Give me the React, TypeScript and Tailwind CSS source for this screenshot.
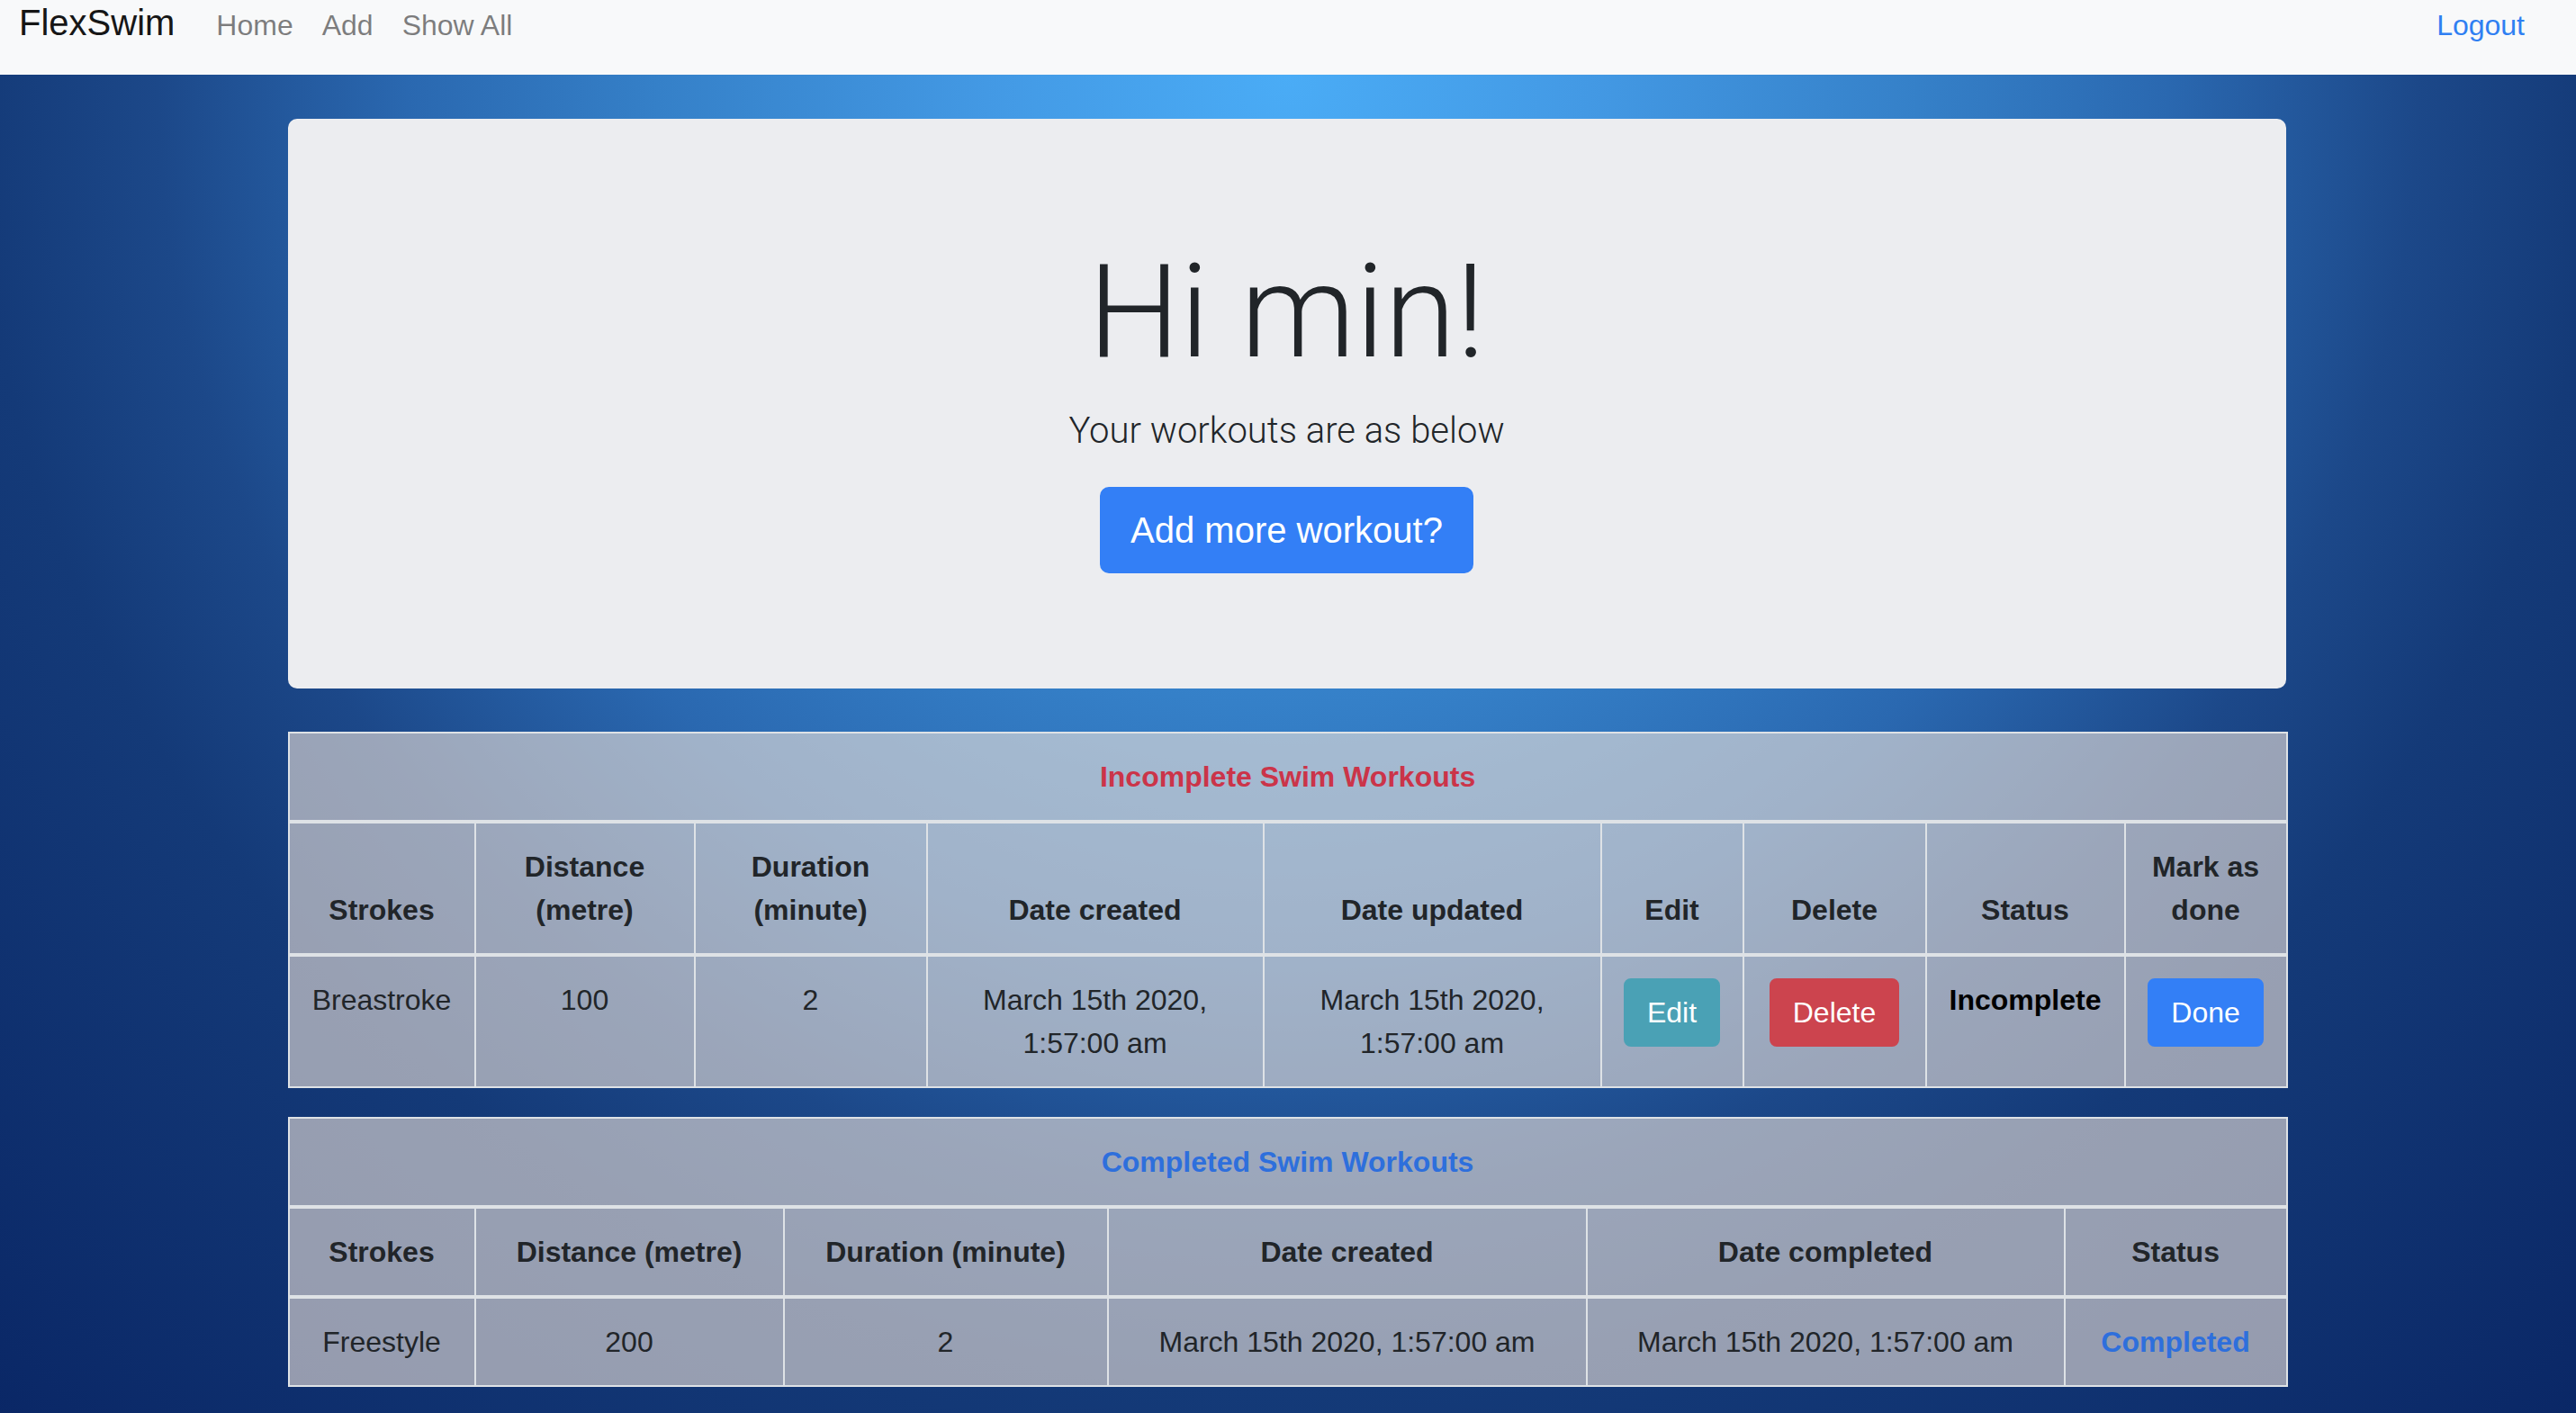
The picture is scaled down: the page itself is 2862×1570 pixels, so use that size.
import React from "react";

const th = "border-2 border-b-4 border-[#dee2e6] p-[24px] align-bottom font-bold";
const td = "border-2 border-[#dee2e6] p-[24px] align-top";
const btn = "inline-block align-top rounded-[8px] border-2 px-[24px] py-[12px] text-[32px] leading-[48px] text-white";

export default function App() {
  return (
    <div className="flex min-h-screen flex-col font-['Liberation_Sans',Arial,Helvetica,sans-serif] text-[#212529]">
      <nav className="flex h-[83px] shrink-0 items-baseline bg-[#f8f9fa] pl-[21px] pr-[41px] pt-[5px]">
        <span className="mr-[30px] text-[40px] leading-[40px] text-[#161616]">FlexSwim</span>
        <a className="px-[16px] text-[32px] leading-[32px] text-[rgba(0,0,0,0.5)]">Home</a>
        <a className="px-[16px] text-[32px] leading-[32px] text-[rgba(0,0,0,0.5)]">Add</a>
        <a className="px-[16px] text-[32px] leading-[32px] text-[rgba(0,0,0,0.5)]">Show All</a>
        <a className="ml-auto px-[16px] text-[32px] leading-[32px] text-[#2f7ff2]">Logout</a>
      </nav>
      <main className="flex-1 bg-[radial-gradient(circle_1460px_at_50%_0%,#4aacf6_0%,#4399e4_23%,#3580c8_48%,#2a68b0_67%,#1c4889_86%,#143a78_100%,#0a2766_142%)] pb-[28px] pr-[3px]">
        <div className="mx-auto w-[2220px] pt-[49px]">
          <section className="rounded-[10px] bg-[#ecedf0] px-[64px] py-[128px] text-center">
            <h1 className="mb-[16px] font-['Roboto',Arial,sans-serif] text-[144px] font-light leading-[173px] text-[#212529]">Hi min!</h1>
            <p className="mb-[32px] font-['Roboto',Arial,sans-serif] text-[40px] font-light leading-[60px]">Your workouts are as below</p>
            <button className="h-[96px] rounded-[10px] border-2 border-[#337ff6] bg-[#337ff6] px-[32px] text-[40px] leading-[60px] text-white">
              Add more workout?
            </button>
          </section>

          <table className="mt-[48px] w-full table-fixed border-collapse border-2 border-[#dee2e6] bg-[rgba(240,228,218,0.6)] text-center text-[32px] leading-[48px]">
            <colgroup>
              <col className="w-[207px]" />
              <col className="w-[244px]" />
              <col className="w-[258px]" />
              <col className="w-[374px]" />
              <col className="w-[375px]" />
              <col className="w-[158px]" />
              <col className="w-[203px]" />
              <col className="w-[221px]" />
              <col className="w-[180px]" />
            </colgroup>
            <thead>
              <tr>
                <th colSpan={9} className={`${th} text-[#cb3449]`}>Incomplete Swim Workouts</th>
              </tr>
              <tr>
                <th className={th}>Strokes</th>
                <th className={th}>Distance (metre)</th>
                <th className={th}>Duration (minute)</th>
                <th className={th}>Date created</th>
                <th className={th}>Date updated</th>
                <th className={th}>Edit</th>
                <th className={th}>Delete</th>
                <th className={th}>Status</th>
                <th className={th}>Mark as done</th>
              </tr>
            </thead>
            <tbody>
              <tr>
                <td className={td}>Breastroke</td>
                <td className={td}>100</td>
                <td className={td}>2</td>
                <td className={td}>March 15th 2020, 1:57:00 am</td>
                <td className={td}>March 15th 2020, 1:57:00 am</td>
                <td className={td}>
                  <button className={`${btn} border-[#4aa1b5] bg-[#4aa1b5]`}>Edit</button>
                </td>
                <td className={td}>
                  <button className={`${btn} border-[#cc444e] bg-[#cc444e]`}>Delete</button>
                </td>
                <td className={`${td} font-bold text-black`}>Incomplete</td>
                <td className={td}>
                  <button className={`${btn} border-[#337ff6] bg-[#337ff6]`}>Done</button>
                </td>
              </tr>
            </tbody>
          </table>

          <table className="mt-[32px] w-full table-fixed border-collapse border-2 border-[#dee2e6] bg-[rgba(240,228,218,0.6)] text-center text-[32px] leading-[48px]">
            <colgroup>
              <col className="w-[207px]" />
              <col className="w-[343px]" />
              <col className="w-[360px]" />
              <col className="w-[532px]" />
              <col className="w-[531px]" />
              <col className="w-[247px]" />
            </colgroup>
            <thead>
              <tr>
                <th colSpan={6} className={`${th} text-[#2e6fdc]`}>Completed Swim Workouts</th>
              </tr>
              <tr>
                <th className={th}>Strokes</th>
                <th className={th}>Distance (metre)</th>
                <th className={th}>Duration (minute)</th>
                <th className={th}>Date created</th>
                <th className={th}>Date completed</th>
                <th className={th}>Status</th>
              </tr>
            </thead>
            <tbody>
              <tr>
                <td className={td}>Freestyle</td>
                <td className={td}>200</td>
                <td className={td}>2</td>
                <td className={td}>March 15th 2020, 1:57:00 am</td>
                <td className={td}>March 15th 2020, 1:57:00 am</td>
                <td className={`${td} font-bold text-[#2e6fdc]`}>Completed</td>
              </tr>
            </tbody>
          </table>
        </div>
      </main>
    </div>
  );
}
